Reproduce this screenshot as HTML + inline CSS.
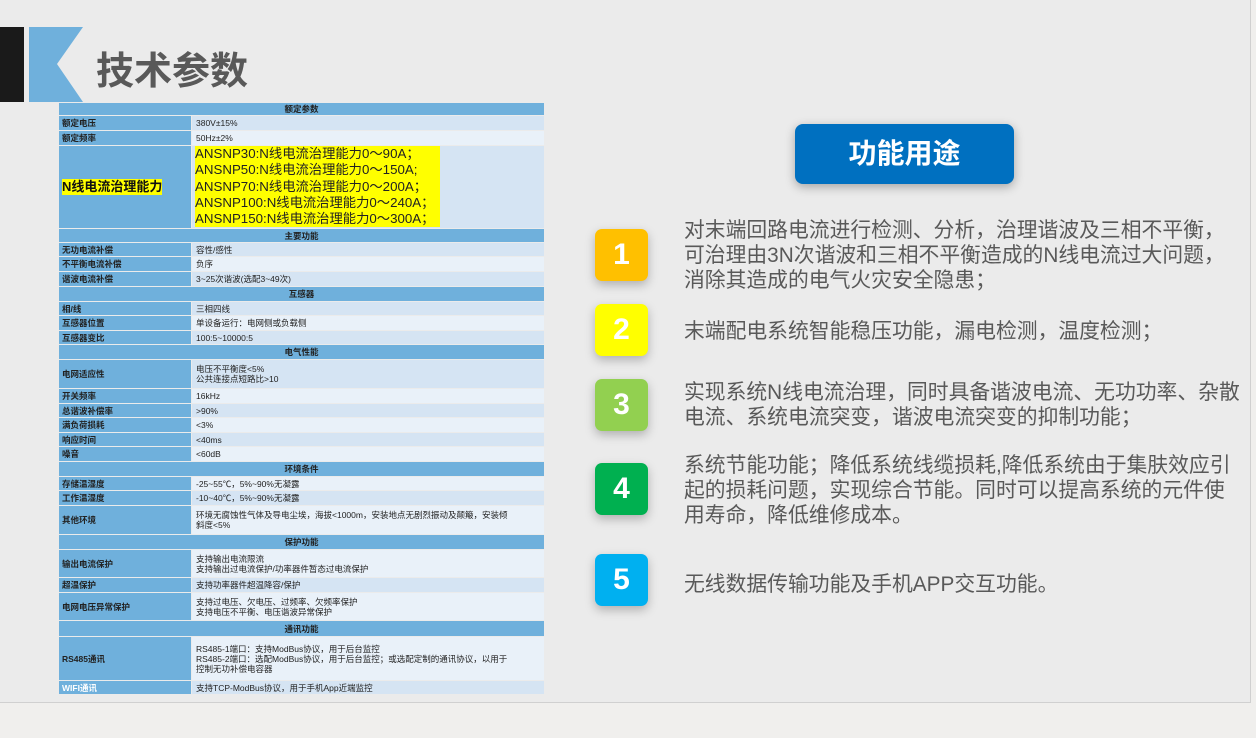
<!DOCTYPE html>
<html><head><meta charset="utf-8"><style>
body{margin:0;width:1256px;height:738px;background:#f0efed;overflow:hidden;font-family:"Liberation Sans","Noto Sans CJK SC",sans-serif;}
#slide{position:absolute;left:0;top:0;width:1250px;height:702px;background:#ebebeb;border-right:1px solid #d0d0d0;border-bottom:1px solid #d0d0d0;}
.abs{position:absolute}
.r{position:absolute;left:59px;width:485px;display:flex;font-size:8.5px;color:#222;line-height:10px}
.r .l{width:132px;background:#6fb0dc;font-weight:bold;padding-left:3px;box-sizing:border-box;display:flex;align-items:center;margin-right:1px}
.r .v{flex:1;background:#d5e4f3;padding-left:4px;display:flex;align-items:center}
.r.b .v{background:#e9f1f9}
.r.h{background:#6fb0dc;justify-content:center;align-items:center;font-weight:bold}
.yl{background:#ffff00;font-size:13.3px;line-height:16.3px;color:#222;display:inline-block;padding-right:6px;align-self:flex-start}
.badge{position:absolute;left:595px;width:53px;height:52px;border-radius:7px;color:#fff;font-weight:bold;font-size:30px;text-align:center;line-height:52px;box-shadow:0 4px 10px rgba(0,0,0,.25)}
.txt{position:absolute;left:684px;font-size:20.8px;line-height:25px;color:#595959;width:565px;white-space:nowrap}
</style></head><body>
<div id="slide">
<div class="abs" style="left:0;top:27px;width:24px;height:75px;background:#1a1a1a"></div>
<svg class="abs" style="left:29px;top:27px" width="54" height="75"><polygon points="0,0 54,0 28,37 54,75 0,75" fill="#6fb0dc"/></svg>
<div class="abs" style="left:96px;top:40px;font-size:38px;font-weight:bold;color:#595959;letter-spacing:0px">技术参数</div>

<div class="r h" style="top:103px;height:12px">额定参数</div>
<div class="r" style="top:116px;height:14px"><div class="l">额定电压</div><div class="v">380V±15%</div></div>
<div class="r b" style="top:131px;height:14px"><div class="l">额定频率</div><div class="v">50Hz±2%</div></div>
<div class="r" style="top:146px;height:82px"><div class="l"><span style="background:#ff0;font-size:13px;line-height:16px;color:#111">N线电流治理能力</span></div><div class="v" style="padding-left:3px;align-items:flex-start"><span class="yl">ANSNP30:N线电流治理能力0～90A；<br>ANSNP50:N线电流治理能力0～150A;<br>ANSNP70:N线电流治理能力0～200A；<br>ANSNP100:N线电流治理能力0～240A；<br>ANSNP150:N线电流治理能力0～300A；</span></div></div>
<div class="r h" style="top:229px;height:13px">主要功能</div>
<div class="r" style="top:243px;height:13px"><div class="l">无功电流补偿</div><div class="v">容性/感性</div></div>
<div class="r b" style="top:257px;height:14px"><div class="l">不平衡电流补偿</div><div class="v">负序</div></div>
<div class="r" style="top:272px;height:14px"><div class="l">谐波电流补偿</div><div class="v">3~25次谐波(选配3~49次)</div></div>
<div class="r h" style="top:287px;height:14px">互感器</div>
<div class="r" style="top:302px;height:13px"><div class="l">相/线</div><div class="v">三相四线</div></div>
<div class="r b" style="top:316px;height:14px"><div class="l">互感器位置</div><div class="v">单设备运行：电网侧或负载侧</div></div>
<div class="r" style="top:331px;height:13px"><div class="l">互感器变比</div><div class="v">100:5~10000:5</div></div>
<div class="r h" style="top:345px;height:14px">电气性能</div>
<div class="r" style="top:360px;height:28px"><div class="l">电网适应性</div><div class="v">电压不平衡度&lt;5%<br>公共连接点短路比&gt;10</div></div>
<div class="r b" style="top:389px;height:14px"><div class="l">开关频率</div><div class="v">16kHz</div></div>
<div class="r" style="top:404px;height:13px"><div class="l">总谐波补偿率</div><div class="v">&gt;90%</div></div>
<div class="r b" style="top:418px;height:14px"><div class="l">满负荷损耗</div><div class="v">&lt;3%</div></div>
<div class="r" style="top:433px;height:13px"><div class="l">响应时间</div><div class="v">&lt;40ms</div></div>
<div class="r b" style="top:447px;height:14px"><div class="l">噪音</div><div class="v">&lt;60dB</div></div>
<div class="r h" style="top:462px;height:14px">环境条件</div>
<div class="r b" style="top:477px;height:13px"><div class="l">存储温湿度</div><div class="v">-25~55℃，5%~90%无凝露</div></div>
<div class="r" style="top:491px;height:14px"><div class="l">工作温湿度</div><div class="v">-10~40℃，5%~90%无凝露</div></div>
<div class="r b" style="top:506px;height:28px"><div class="l">其他环境</div><div class="v" style="white-space:nowrap">环境无腐蚀性气体及导电尘埃，海拔&lt;1000m，安装地点无剧烈振动及颠簸，安装倾<br>斜度&lt;5%</div></div>
<div class="r h" style="top:535px;height:14px">保护功能</div>
<div class="r b" style="top:550px;height:27px"><div class="l">输出电流保护</div><div class="v">支持输出电流限流<br>支持输出过电流保护/功率器件暂态过电流保护</div></div>
<div class="r" style="top:578px;height:14px"><div class="l">超温保护</div><div class="v">支持功率器件超温降容/保护</div></div>
<div class="r b" style="top:593px;height:27px"><div class="l">电网电压异常保护</div><div class="v">支持过电压、欠电压、过频率、欠频率保护<br>支持电压不平衡、电压谐波异常保护</div></div>
<div class="r h" style="top:621px;height:15px">通讯功能</div>
<div class="r b" style="top:637px;height:43px"><div class="l">RS485通讯</div><div class="v" style="white-space:nowrap">RS485-1端口：支持ModBus协议，用于后台监控<br>RS485-2端口：选配ModBus协议，用于后台监控；或选配定制的通讯协议，以用于<br>控制无功补偿电容器</div></div>
<div class="r" style="top:681px;height:13px"><div class="l" style="color:#fff">WIFI通讯</div><div class="v">支持TCP-ModBus协议，用于手机App近端监控</div></div>

<div class="abs" style="left:795px;top:124px;width:219px;height:60px;background:#0070c0;border-radius:8px;color:#fff;font-size:28px;font-weight:bold;text-align:center;line-height:60px;box-shadow:0 3px 10px rgba(0,0,0,.3)">功能用途</div>

<div class="badge" style="top:229px;background:#ffc000">1</div>
<div class="badge" style="top:304px;background:#ffff00">2</div>
<div class="badge" style="top:379px;background:#92d050">3</div>
<div class="badge" style="top:463px;background:#00b050">4</div>
<div class="badge" style="top:554px;background:#00b0f0">5</div>

<div class="txt" style="top:218px">对末端回路电流进行检测、分析，治理谐波及三相不平衡，<br>可治理由3N次谐波和三相不平衡造成的N线电流过大问题，<br>消除其造成的电气火灾安全隐患；</div>
<div class="txt" style="top:319px">末端配电系统智能稳压功能，漏电检测，温度检测；</div>
<div class="txt" style="top:380px">实现系统N线电流治理，同时具备谐波电流、无功功率、杂散<br>电流、系统电流突变，谐波电流突变的抑制功能；</div>
<div class="txt" style="top:453px">系统节能功能；降低系统线缆损耗,降低系统由于集肤效应引<br>起的损耗问题，实现综合节能。同时可以提高系统的元件使<br>用寿命，降低维修成本。</div>
<div class="txt" style="top:572px">无线数据传输功能及手机APP交互功能。</div>
</div>
</body></html>
